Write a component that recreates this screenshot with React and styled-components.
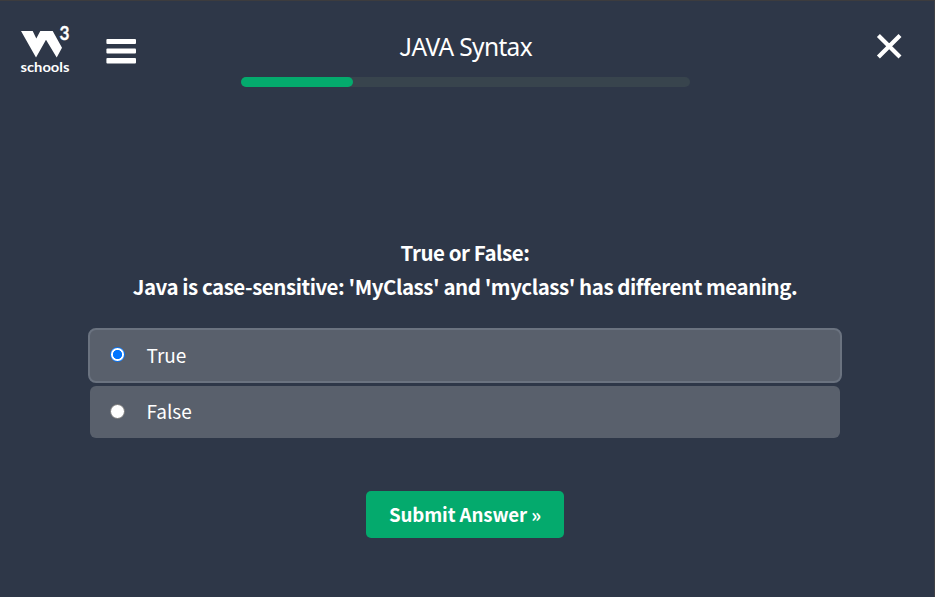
import React, { useState } from "react";
import styled, { createGlobalStyle } from "styled-components";

const GlobalStyle = createGlobalStyle`
  * { box-sizing: border-box; }
  body { margin: 0; background: #2e3748; overflow: hidden; }
`;

const sourceSans = `"Source Sans Pro", "Noto Sans CJK SC", sans-serif`;

const Page = styled.div`
  width: 935px;
  height: 597px;
  display: flex;
  flex-direction: column;
  background: #2e3748;
  border-top: 1px solid #3d3c3e;
  border-right: 1px solid #3f4045;
  color: #fff;
  font-family: ${sourceSans};
`;

const Header = styled.header`
  display: grid;
  grid-template-columns: 241px 449px 1fr;
  height: 234px;
`;

const Left = styled.div`
  display: flex;
  align-items: flex-start;
  padding: 25px 0 0 20px;
  gap: 36px;
`;

const Logo = styled.a`
  display: block;
  width: 50px;
  height: 49px;
  svg { display: block; overflow: visible; }
  text { fill: #fff; font-family: Lato, sans-serif; font-weight: 700; }
`;

const IconButton = styled.button`
  display: block;
  padding: 0;
  border: 0;
  background: none;
  color: #fff;
  margin-top: ${(p) => p.$top}px;
  svg { display: block; }
`;

const Middle = styled.div`
  padding-top: 27px;
`;

const Title = styled.h1`
  margin: 0;
  height: 49px;
  font: 400 24.5px/36px "Segoe UI", "Noto Sans", sans-serif;
  letter-spacing: -0.65px;
  text-align: center;
  &::first-letter {
    font-family: "Segoe UI", "Noto Sans CJK SC", sans-serif;
  }
`;

const Track = styled.div`
  height: 10px;
  border-radius: 5px;
  background: #38444d;
`;

const Fill = styled.div`
  height: 10px;
  border-radius: 5px;
  background: #04aa6d;
`;

const Right = styled.div`
  display: flex;
  align-items: flex-start;
  justify-content: flex-end;
  padding: 32px 32px 0 0;
`;

const Quiz = styled.form`
  width: 754px;
  margin-left: 88px;
  display: flex;
  flex-direction: column;
  align-items: center;
`;

const Question = styled.h2`
  margin: 0 0 25px;
  height: 68px;
  font-size: 20.5px;
  font-weight: 700;
  line-height: 34px;
  letter-spacing: -0.46px;
  text-align: center;
  white-space: nowrap;
`;

const Option = styled.label`
  display: flex;
  align-items: center;
  width: ${(p) => (p.$selected ? 754 : 750)}px;
  height: ${(p) => (p.$selected ? 55 : 52)}px;
  margin-bottom: 3px;
  padding-left: 20px;
  gap: 21.5px;
  border: ${(p) => (p.$selected ? "2px solid #6b7380" : "0")};
  border-radius: ${(p) => (p.$selected ? 8 : 6)}px;
  background: #59606c;
  font-size: 19px;
  line-height: 30px;
`;

const OptionText = styled.span`
  padding-bottom: 2px;
`;

const Radio = styled.input`
  appearance: none;
  flex: none;
  width: 15px;
  height: 15px;
  margin: 0 0 2px;
  border: 1px solid #767676;
  border-radius: 50%;
  background: #fff;
  &:checked {
    border-color: #0075ff;
    background: radial-gradient(circle, #0075ff 4.3px, #fff 4.9px);
  }
`;

const Submit = styled.button`
  width: 198px;
  height: 47px;
  margin-top: 50px;
  padding: 0 0 2px;
  border: 0;
  border-radius: 5px;
  background: #04aa6d;
  color: #fff;
  font: 700 18.7px/45px ${sourceSans};
  letter-spacing: -0.1px;
  white-space: nowrap;
`;

const W3Logo = () => (
  <Logo aria-label="W3Schools">
    <svg width="50" height="49" viewBox="20 26 50 49">
      <path fill="#fff" d="M21 31H32.7L36.3 38.5L40.3 31H52.7L62 47.7L56.7 57.5L46 39.7L36 57.5Z" />
      <text x="59.6" y="40" fontSize="18" textLength="10" lengthAdjust="spacingAndGlyphs" stroke="#fff" strokeWidth="0.3">3</text>
      <text x="20.5" y="72" fontSize="13" textLength="49" lengthAdjust="spacingAndGlyphs">schools</text>
    </svg>
  </Logo>
);

const MenuIcon = () => (
  <svg width="30" height="25" viewBox="0 0 30 25" fill="currentColor">
    <rect x="0.4" y="0" width="29.6" height="5" rx="1" />
    <rect x="0.4" y="9.5" width="29.6" height="5" rx="1" />
    <rect x="0.4" y="19" width="29.6" height="5.5" rx="1" />
  </svg>
);

const CloseIcon = () => (
  <svg width="26" height="26" viewBox="0 0 26 26" stroke="currentColor" strokeWidth="4.2">
    <path d="M2.4 2.4L24 24M24 2.4L2.4 24" />
  </svg>
);

const options = ["True", "False"];

export default function App() {
  const [answer, setAnswer] = useState("True");
  return (
    <>
      <GlobalStyle />
      <Page>
        <Header>
          <Left>
            <W3Logo />
            <IconButton $top={13} aria-label="Menu"><MenuIcon /></IconButton>
          </Left>
          <Middle>
            <Title>JAVA Syntax</Title>
            <Track><Fill style={{ width: `${(1 / 4) * 100}%` }} /></Track>
          </Middle>
          <Right>
            <IconButton $top={0} aria-label="Close"><CloseIcon /></IconButton>
          </Right>
        </Header>
        <Quiz onSubmit={(e) => e.preventDefault()}>
          <Question>
            True or False:<br />
            Java is case-sensitive: 'MyClass' and 'myclass' has different meaning.
          </Question>
          {options.map((option) => (
            <Option key={option} $selected={option === answer}>
              <Radio type="radio" name="answer" checked={option === answer} onChange={() => setAnswer(option)} />
              <OptionText>{option}</OptionText>
            </Option>
          ))}
          <Submit>Submit Answer »</Submit>
        </Quiz>
      </Page>
    </>
  );
}
